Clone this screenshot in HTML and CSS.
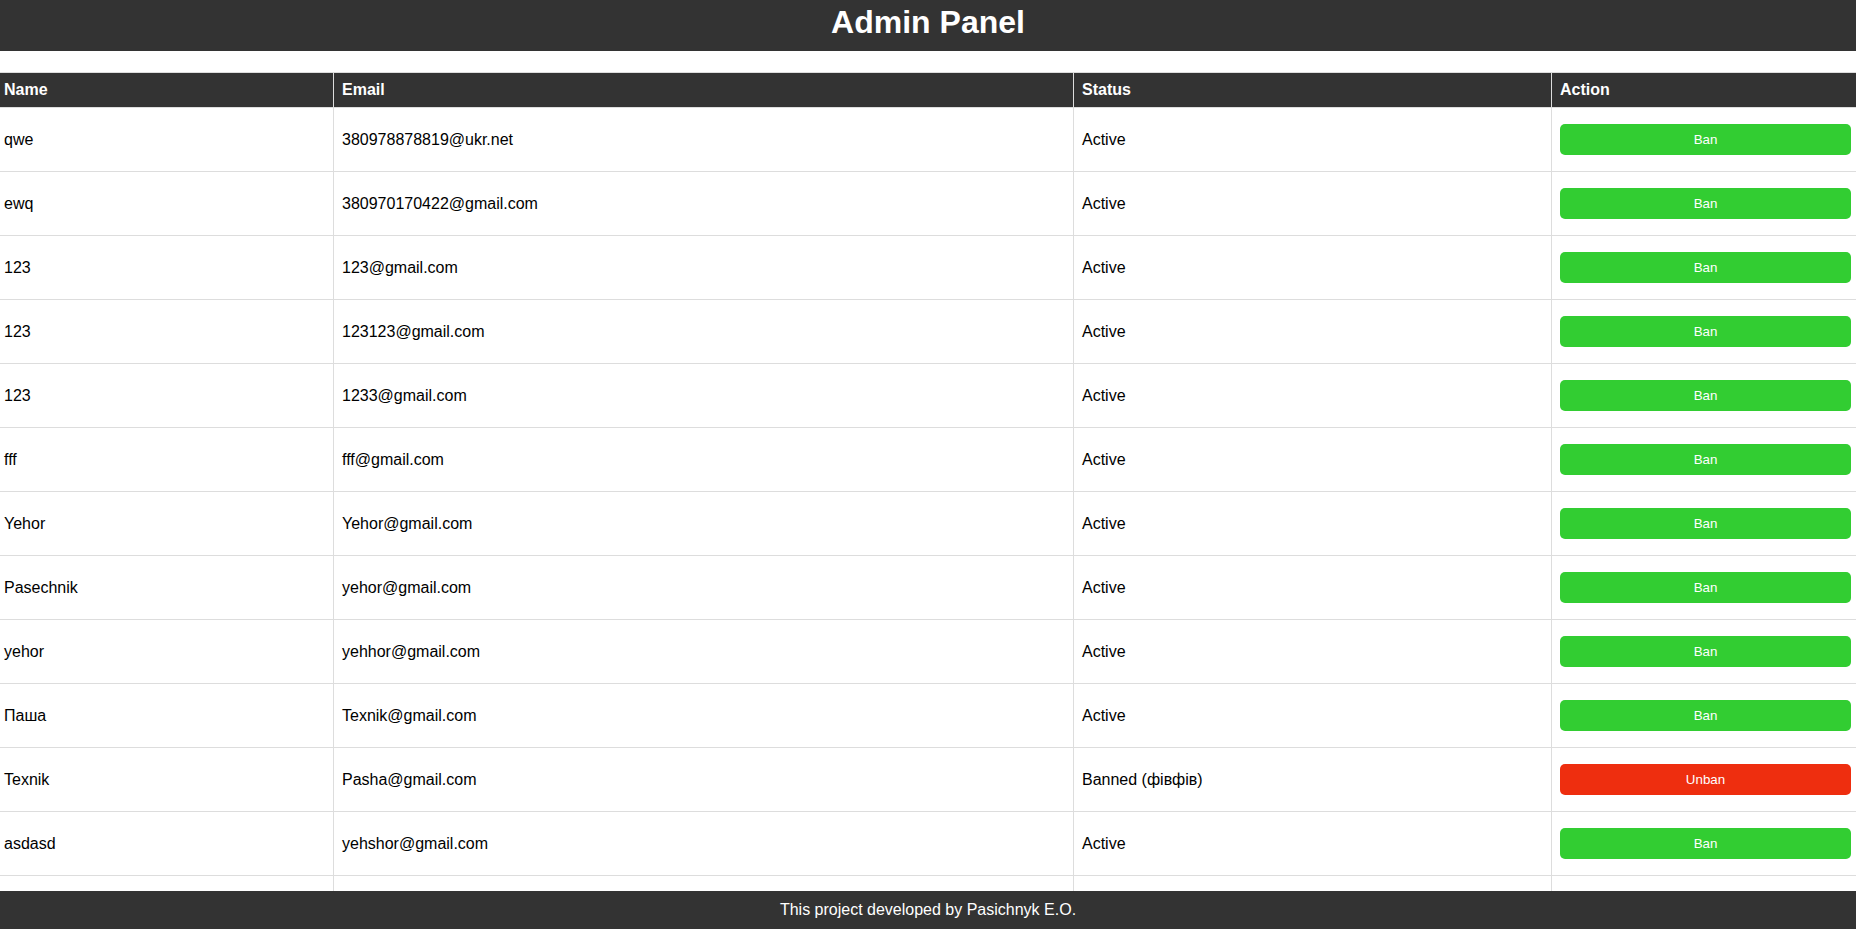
FILE: index.html
```html
<!DOCTYPE html>
<html lang="en">
<head>
<meta charset="utf-8">
<title>Admin Panel</title>
<link rel="stylesheet" href="styles.css">
</head>
<body>
<header class="topbar">
  <h1 class="title">Admin Panel</h1>
</header>
<main class="content">
  <table class="users">
    <colgroup>
      <col class="c-name">
      <col class="c-email">
      <col class="c-status">
      <col class="c-action">
    </colgroup>
    <thead>
      <tr><th>Name</th><th>Email</th><th>Status</th><th>Action</th></tr>
    </thead>
    <tbody>
      <tr><td>qwe</td><td>380978878819@ukr.net</td><td>Active</td><td><button class="btn btn-ban">Ban</button></td></tr>
      <tr><td>ewq</td><td>380970170422@gmail.com</td><td>Active</td><td><button class="btn btn-ban">Ban</button></td></tr>
      <tr><td>123</td><td>123@gmail.com</td><td>Active</td><td><button class="btn btn-ban">Ban</button></td></tr>
      <tr><td>123</td><td>123123@gmail.com</td><td>Active</td><td><button class="btn btn-ban">Ban</button></td></tr>
      <tr><td>123</td><td>1233@gmail.com</td><td>Active</td><td><button class="btn btn-ban">Ban</button></td></tr>
      <tr><td>fff</td><td>fff@gmail.com</td><td>Active</td><td><button class="btn btn-ban">Ban</button></td></tr>
      <tr><td>Yehor</td><td>Yehor@gmail.com</td><td>Active</td><td><button class="btn btn-ban">Ban</button></td></tr>
      <tr><td>Pasechnik</td><td>yehor@gmail.com</td><td>Active</td><td><button class="btn btn-ban">Ban</button></td></tr>
      <tr><td>yehor</td><td>yehhor@gmail.com</td><td>Active</td><td><button class="btn btn-ban">Ban</button></td></tr>
      <tr><td>Паша</td><td>Texnik@gmail.com</td><td>Active</td><td><button class="btn btn-ban">Ban</button></td></tr>
      <tr><td>Texnik</td><td>Pasha@gmail.com</td><td>Banned (фівфів)</td><td><button class="btn btn-unban">Unban</button></td></tr>
      <tr><td>asdasd</td><td>yehshor@gmail.com</td><td>Active</td><td><button class="btn btn-ban">Ban</button></td></tr>
      <tr><td>test</td><td>test@gmail.com</td><td>Active</td><td><button class="btn btn-ban">Ban</button></td></tr>
    </tbody>
  </table>
</main>
<footer class="footer">This project developed by Pasichnyk E.O.</footer>
</body>
</html>
```

FILE: styles.css
```css
html, body {
  margin: 0;
  padding: 0;
}
body {
  font-family: "Liberation Sans", Arial, sans-serif;
  font-size: 16px;
  color: #000;
  background: #fff;
  overflow-x: hidden;
  padding-bottom: 38px;
}
.topbar {
  background: #333;
  color: #fff;
  text-align: center;
  padding: 4px 0 10px;
}
.title {
  margin: 0;
  font-size: 32px;
  font-weight: bold;
  line-height: 37px;
}
.content {
  padding-top: 21px;
}
.users {
  border-collapse: collapse;
  table-layout: fixed;
  width: 1864px;
  margin-left: -5px;
}
.c-name { width: 338px; }
.c-email { width: 740px; }
.c-status { width: 478px; }
.c-action { width: 308px; }
.users th,
.users td {
  border: 1px solid #ddd;
  padding: 8px;
  text-align: left;
  vertical-align: middle;
  line-height: 18px;
}
.users th {
  background: #333;
  color: #fff;
  font-weight: bold;
}
.btn {
  display: block;
  width: 100%;
  margin: 8px 0;
  padding: 8px;
  border: none;
  border-radius: 5px;
  color: #fff;
  font-family: "Liberation Sans", Arial, sans-serif;
  font-size: 13.333px;
  line-height: 15px;
  cursor: pointer;
}
.btn-ban { background: #32cd32; }
.btn-unban { background: #ee2e0f; }
.footer {
  position: fixed;
  left: 0;
  right: 0;
  bottom: 0;
  background: #333;
  color: #fff;
  text-align: center;
  padding: 10px 0;
  line-height: 18px;
}
```
